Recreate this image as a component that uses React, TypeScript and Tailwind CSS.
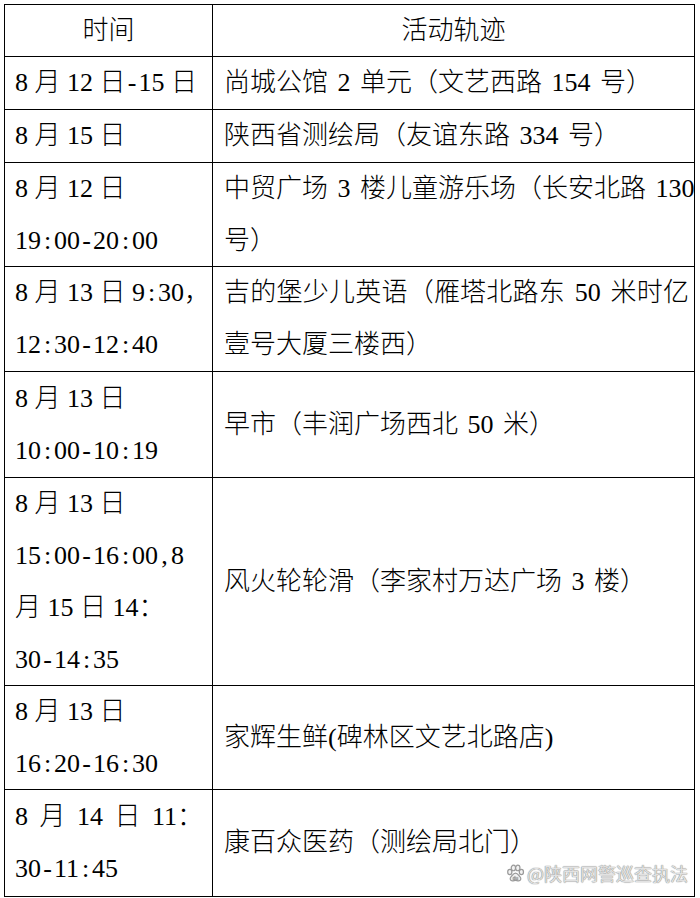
import React from "react";

type Line = string | { t: string; j?: boolean; w?: boolean };

function T({ s }: { s: string }) {
  const parts: React.ReactNode[] = [];
  let buf = "";
  let k = 0;
  for (const ch of s) {
    if (ch === ":" || ch === "-" || ch === ",") {
      if (buf) {
        parts.push(<React.Fragment key={k++}>{buf}</React.Fragment>);
        buf = "";
      }
      parts.push(
        <span key={k++} className="inline-block w-[0.5em] text-center">
          {ch}
        </span>
      );
    } else {
      buf += ch;
    }
  }
  if (buf) parts.push(<React.Fragment key={k++}>{buf}</React.Fragment>);
  return <>{parts}</>;
}

function Lines({ lines }: { lines: Line[] }) {
  return (
    <div className="w-full">
      {lines.map((l, i) => {
        const o = typeof l === "string" ? { t: l } : l;
        if (o.j) {
          return (
            <div key={i} className="whitespace-nowrap text-justify [text-align-last:justify]">
              <T s={o.t} />
            </div>
          );
        }
        if (o.w) {
          return (
            <div key={i} className="whitespace-nowrap [word-spacing:5px]">
              <T s={o.t} />
            </div>
          );
        }
        return (
          <div key={i} className="whitespace-nowrap">
            <T s={o.t} />
          </div>
        );
      })}
    </div>
  );
}

const rows: { left: Line[]; right: Line[]; h: string }[] = [
  { left: ["8 月 12 日-15 日"], right: ["尚城公馆 2 单元（文艺西路 154 号）"], h: "h-[53px]" },
  { left: ["8 月 15 日"], right: ["陕西省测绘局（友谊东路 334 号）"], h: "h-[53px]" },
  {
    left: ["8 月 12 日", "19:00-20:00"],
    right: [{ t: "中贸广场 3 楼儿童游乐场（长安北路 130", j: true }, "号）"],
    h: "h-[104px]",
  },
  {
    left: ["8 月 13 日 9:30，", "12:30-12:40"],
    right: [{ t: "吉的堡少儿英语（雁塔北路东 50 米时亿", j: true }, "壹号大厦三楼西）"],
    h: "h-[105px]",
  },
  { left: ["8 月 13 日", "10:00-10:19"], right: ["早市（丰润广场西北 50 米）"], h: "h-[106px]" },
  {
    left: ["8 月 13 日", "15:00-16:00,8", "月 15 日 14：", "30-14:35"],
    right: ["风火轮轮滑（李家村万达广场 3 楼）"],
    h: "h-[208px]",
  },
  { left: ["8 月 13 日", "16:20-16:30"], right: ["家辉生鲜(碑林区文艺北路店)"], h: "h-[104px]" },
  {
    left: [{ t: "8 月 14 日 11：", w: true }, "30-11:45"],
    right: ["康百众医药（测绘局北门）"],
    h: "h-[106px]",
  },
];

function Paw() {
  return (
    <svg width="19" height="19" viewBox="0 0 20 20" className="shrink-0">
      <g fill="#f2f2f2" stroke="#9a9a9a" strokeWidth="1.3">
        <ellipse cx="4" cy="8.5" rx="2.2" ry="2.8" />
        <ellipse cx="7.8" cy="4.2" rx="2.3" ry="2.9" />
        <ellipse cx="12.4" cy="4.2" rx="2.3" ry="2.9" />
        <ellipse cx="16.2" cy="8.5" rx="2.2" ry="2.8" />
        <path d="M10 9.5c-2.2 0-3.3 2.4-4.8 4-1.4 1.5-1 4.3 1.6 4.3 1.3 0 2.1-.5 3.2-.5s1.9.5 3.2.5c2.6 0 3-2.8 1.6-4.3-1.5-1.6-2.6-4-4.8-4z" />
      </g>
      <text x="10" y="16.6" textAnchor="middle" fontSize="5" fill="#9a9a9a" fontFamily="'Liberation Sans', sans-serif">
        du
      </text>
    </svg>
  );
}

export default function App() {
  return (
    <div className="w-[700px] h-[898px] bg-white pt-[4px] pl-[4px] text-black font-['Liberation_Serif','Noto_Sans_CJK_SC',serif] text-[26px] leading-[52px] font-light">
      <div className="relative w-[691px] border border-black flex flex-col">
        <div className="flex h-[52px] border-b border-black">
          <div className="w-[208px] shrink-0 border-r border-black flex items-center justify-center">时间</div>
          <div className="flex-1 flex items-center justify-center">活动轨迹</div>
        </div>
        {rows.map((r, i) => (
          <div
            key={i}
            className={`flex ${r.h} ${i < rows.length - 1 ? "border-b border-black" : ""}`}
          >
            <div className="w-[208px] shrink-0 border-r border-black flex items-center pl-[10px]">
              <Lines lines={r.left} />
            </div>
            <div className="flex-1 flex items-center pl-[11px] pr-[5px] [word-spacing:3px]">
              <Lines lines={r.right} />
            </div>
          </div>
        ))}
        <div className="absolute right-[6px] bottom-[13px] flex items-center gap-[2px] text-[18px] leading-[20px] text-[#e2e2e2] font-['Noto_Sans_CJK_SC',sans-serif] font-normal [text-shadow:0_0_1px_#888,0_0_1px_#888]">
          <Paw />
          <span>@陕西网警巡查执法</span>
        </div>
      </div>
    </div>
  );
}
